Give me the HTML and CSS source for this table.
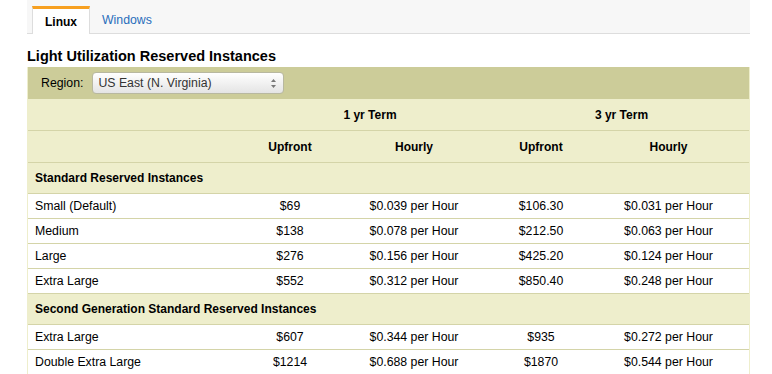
FILE: index.html
```html
<!DOCTYPE html>
<html lang="en">
<head>
    <meta charset="UTF-8">
    <title>Reserved Instances Pricing</title>
    <link rel="stylesheet" href="styles.css">
</head>
<body>
    <div class="container">
        <div class="tabs">
            <span class="tab active">Linux</span>
            <span class="tab">Windows</span>
        </div>

        <h2>Light Utilization Reserved Instances</h2>

        <div class="pricing">
            <div class="region-bar">
                <label for="region">Region:</label>
                <div class="select">
                    <span>US East (N. Virginia)</span>
                    <svg width="7" height="11" viewBox="0 0 7 11">
                        <path d="M3.5 1 L6 4 L1 4 Z" fill="#777"/>
                        <path d="M3.5 10 L6 7 L1 7 Z" fill="#777"/>
                    </svg>
                </div>
            </div>
            <table>
                <colgroup>
                    <col class="c-name">
                    <col class="c-up1">
                    <col class="c-hr1">
                    <col class="c-up3">
                    <col class="c-hr3">
                </colgroup>
                <thead>
                    <tr class="head">
                        <th></th>
                        <th colspan="2">1 yr Term</th>
                        <th colspan="2">3 yr Term</th>
                    </tr>
                    <tr class="head">
                        <th></th>
                        <th>Upfront</th>
                        <th>Hourly</th>
                        <th>Upfront</th>
                        <th>Hourly</th>
                    </tr>
                </thead>
                <tbody>
                    <tr class="section"><td colspan="5">Standard Reserved Instances</td></tr>
                    <tr><td>Small (Default)</td><td>$69</td><td>$0.039 per Hour</td><td>$106.30</td><td>$0.031 per Hour</td></tr>
                    <tr><td>Medium</td><td>$138</td><td>$0.078 per Hour</td><td>$212.50</td><td>$0.063 per Hour</td></tr>
                    <tr><td>Large</td><td>$276</td><td>$0.156 per Hour</td><td>$425.20</td><td>$0.124 per Hour</td></tr>
                    <tr><td>Extra Large</td><td>$552</td><td>$0.312 per Hour</td><td>$850.40</td><td>$0.248 per Hour</td></tr>
                    <tr class="section"><td colspan="5">Second Generation Standard Reserved Instances</td></tr>
                    <tr><td>Extra Large</td><td>$607</td><td>$0.344 per Hour</td><td>$935</td><td>$0.272 per Hour</td></tr>
                    <tr><td>Double Extra Large</td><td>$1214</td><td>$0.688 per Hour</td><td>$1870</td><td>$0.544 per Hour</td></tr>
                </tbody>
            </table>
        </div>
    </div>
</body>
</html>
```

FILE: styles.css
```css
body {
    font-family: "Liberation Sans", Arial, sans-serif;
    font-size: 12.3px;
    color: #000;
    margin: 0;
    background: #fff;
}
.container {
    width: 723px;
    margin-left: 27px;
}
.tabs {
    background-color: #f7f7f7;
    border-bottom: 1px solid #dddddd;
    height: 33px;
    display: flex;
    align-items: flex-end;
    padding-left: 5px;
}
.tab {
    display: block;
    height: 24px;
    line-height: 20px;
    padding: 0 12px;
    color: #2a6ebb;
    font-size: 12.3px;
    margin-bottom: -1px;
}
.tab.active {
    background: #fff;
    color: #000;
    font-weight: bold;
    font-size: 12px;
    border-top: 3px solid #f7a020;
    border-left: 1px solid #dddddd;
    border-right: 1px solid #dddddd;
    height: 25px;
    line-height: 26px;
    padding: 0 12px 0 12px;
}
h2 {
    font-size: 14.5px;
    font-weight: bold;
    margin: 13px 0 2px 0;
    line-height: 18px;
}
.pricing {
    border-left: 1px solid #eeeecc;
    border-right: 1px solid #eeeecc;
}
.region-bar {
    background-color: #cccc99;
    height: 32px;
    display: flex;
    align-items: center;
    padding-left: 13px;
    gap: 9px;
}
.select {
    border: 1px solid #b8b8a0;
    border-radius: 4px;
    background: linear-gradient(#ffffff, #e4e4e4);
    display: flex;
    align-items: center;
    justify-content: space-between;
    padding: 0 6px 0 5px;
    box-sizing: border-box;
    width: 192px;
    height: 22px;
    color: #333;
}
table {
    width: 100%;
    border-collapse: collapse;
    table-layout: fixed;
}
.c-name { width: 218px; }
.c-up1 { width: 88px; }
.c-hr1 { width: 160px; }
.c-up3 { width: 94px; }
.c-hr3 { width: auto; }
th, td {
    text-align: center;
    padding: 0;
    border-bottom: 1px solid #d4d4a8;
}
th {
    background-color: #eeeecc;
    font-weight: bold;
    font-size: 12px;
    height: 31px;
}
td {
    height: 24px;
}
td:first-child {
    text-align: left;
    padding-left: 7px;
}
tr.section td {
    background-color: #eeeecc;
    font-weight: bold;
    font-size: 12px;
    height: 30px;
}
```
